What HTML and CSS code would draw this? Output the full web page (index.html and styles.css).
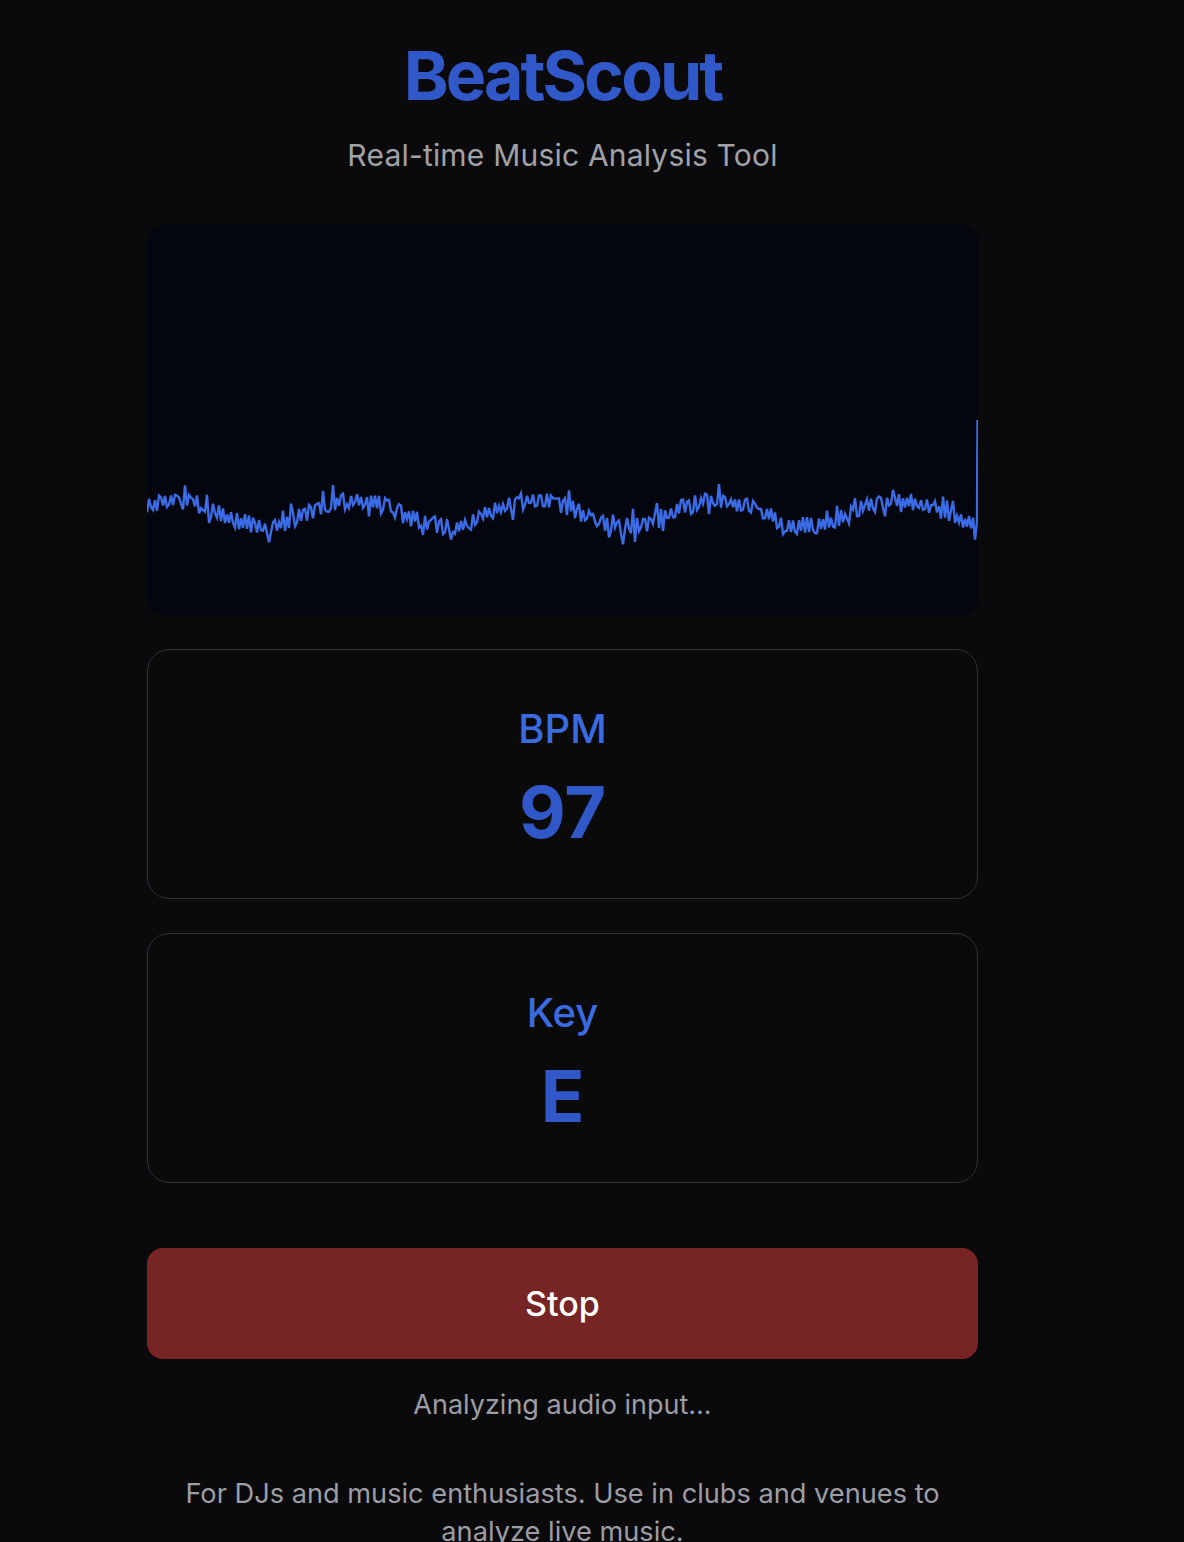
FILE: index.html
```html
<!DOCTYPE html>
<html lang="en">
<head>
<meta charset="utf-8">
<title>BeatScout</title>
<link rel="stylesheet" href="styles.css">
</head>
<body>
<main class="app">
  <header class="header">
    <h1 class="title">BeatScout</h1>
    <p class="subtitle">Real-time Music Analysis Tool</p>
  </header>
  <section class="visualizer">
    <svg class="wave" viewBox="0 0 831 390" preserveAspectRatio="none">
      <path id="wave-path" d="" />
    </svg>
  </section>
  <section class="stat">
    <div class="stat-label">BPM</div>
    <div class="stat-value">97</div>
  </section>
  <section class="stat">
    <div class="stat-label">Key</div>
    <div class="stat-value">E</div>
  </section>
  <button class="stop-btn">Stop</button>
  <p class="status">Analyzing audio input...</p>
  <p class="footer">For DJs and music enthusiasts. Use in clubs and venues to analyze live music.</p>
</main>
<script src="wave.js"></script>
</body>
</html>
```
FILE: styles.css
```css
* { box-sizing: border-box; }
html, body { margin: 0; padding: 0; }
body {
  background: #0a0a0c;
  font-family: Inter, "Noto Sans", "Liberation Sans", sans-serif;
  color: #e5e5e5;
}
.app {
  width: 831px;
  margin-left: 147px;
  display: flex;
  flex-direction: column;
}
.header {
  text-align: center;
  padding-top: 41px;
}
.title {
  margin: 0;
  font-size: 68px;
  line-height: 68px;
  font-weight: 700;
  letter-spacing: -0.043em;
  color: #3158c8;
}
.subtitle {
  margin: 28px 0 0;
  font-size: 30px;
  line-height: 36px;
  letter-spacing: 0.2px;
  color: #a1a1a8;
}
.visualizer {
  margin-top: 52px;
  height: 390px;
  border-radius: 16px;
  background: #03060f;
  overflow: hidden;
}
.wave { display: block; width: 831px; height: 390px; }
.wave path {
  fill: none;
  stroke: #3b6ce6;
  stroke-width: 2.4;
  stroke-linejoin: miter;
}
.stat {
  margin-top: 34px;
  height: 250px;
  border: 1.5px solid #323237;
  border-radius: 22px;
  background: #0a0a0a;
  display: flex;
  flex-direction: column;
  align-items: center;
  justify-content: center;
  gap: 19px;
  padding-top: 8px;
}
.stat-label {
  font-size: 40px;
  line-height: 48px;
  font-weight: 500;
  color: #3b6be0;
}
.stat-value {
  font-size: 72px;
  line-height: 80px;
  font-weight: 700;
  color: #3158c8;
}
.stop-btn {
  margin-top: 65px;
  height: 111px;
  border: none;
  border-radius: 16px;
  background: #772524;
  color: #ffffff;
  font-family: inherit;
  font-size: 34px;
  font-weight: 500;
}
.status {
  margin: 29px 0 0;
  text-align: center;
  font-size: 27px;
  line-height: 34px;
  color: #9d9da4;
}
.footer {
  margin: 53px auto 0;
  max-width: 780px;
  text-align: center;
  font-size: 27.2px;
  line-height: 38px;
  color: #9d9da4;
}
```
FILE: wave.js
```js
(function () {
  var seed = 2024;
  function rnd() {
    seed |= 0; seed = (seed + 0x6D2B79F5) | 0;
    var t = Math.imul(seed ^ (seed >>> 15), 1 | seed);
    t = (t + Math.imul(t ^ (t >>> 7), 61 | t)) ^ t;
    return ((t ^ (t >>> 14)) >>> 0) / 4294967296;
  }
  var pts = [];
  var sign = 1;
  for (var x = 0; x <= 830; x += 2) {
    var base = 288 - 13 * Math.cos(2 * Math.PI * (x - 208) / 181);
    sign = rnd() < 0.7 ? -sign : sign;
    var amp = 2 + rnd() * 7;
    if (rnd() < 0.07) amp += 6 + rnd() * 6;
    pts.push([x, base + sign * amp]);
  }
  pts.push([830.5, 195]);
  var d = 'M' + pts.map(function (p) { return p[0].toFixed(1) + ' ' + p[1].toFixed(1); }).join(' L');
  document.getElementById('wave-path').setAttribute('d', d);
})();
```
